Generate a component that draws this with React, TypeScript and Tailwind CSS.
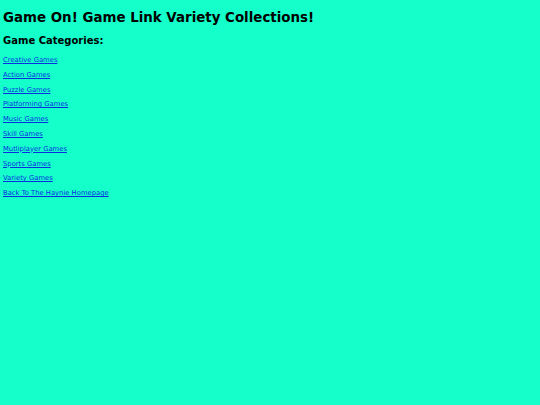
export default function App() {
  const links = [
    "Creative Games",
    "Action Games",
    "Puzzle Games",
    "Platforming Games",
    "Music Games",
    "Skill Games",
    "Mutliplayer Games",
    "Sports Games",
    "Variety Games",
    "Back To The Haynie Homepage",
  ];
  return (
    <div className="min-h-[405px] bg-[#14ffca] px-[3px] pt-[8px] font-['DejaVu_Sans',sans-serif] text-black">
      <h1 className="text-[13.4px] font-bold leading-[19px]">Game On! Game Link Variety Collections!</h1>
      <h2 className="mt-[8px] text-[10px] font-bold leading-[12px]">Game Categories:</h2>
      <div className="mt-[6px] flex flex-col">
        {links.map((l) => (
          <a key={l} href="#" className="text-[6.8px] leading-[14.8px] text-[#0a2fe0] underline w-fit">
            {l}
          </a>
        ))}
      </div>
    </div>
  );
}
